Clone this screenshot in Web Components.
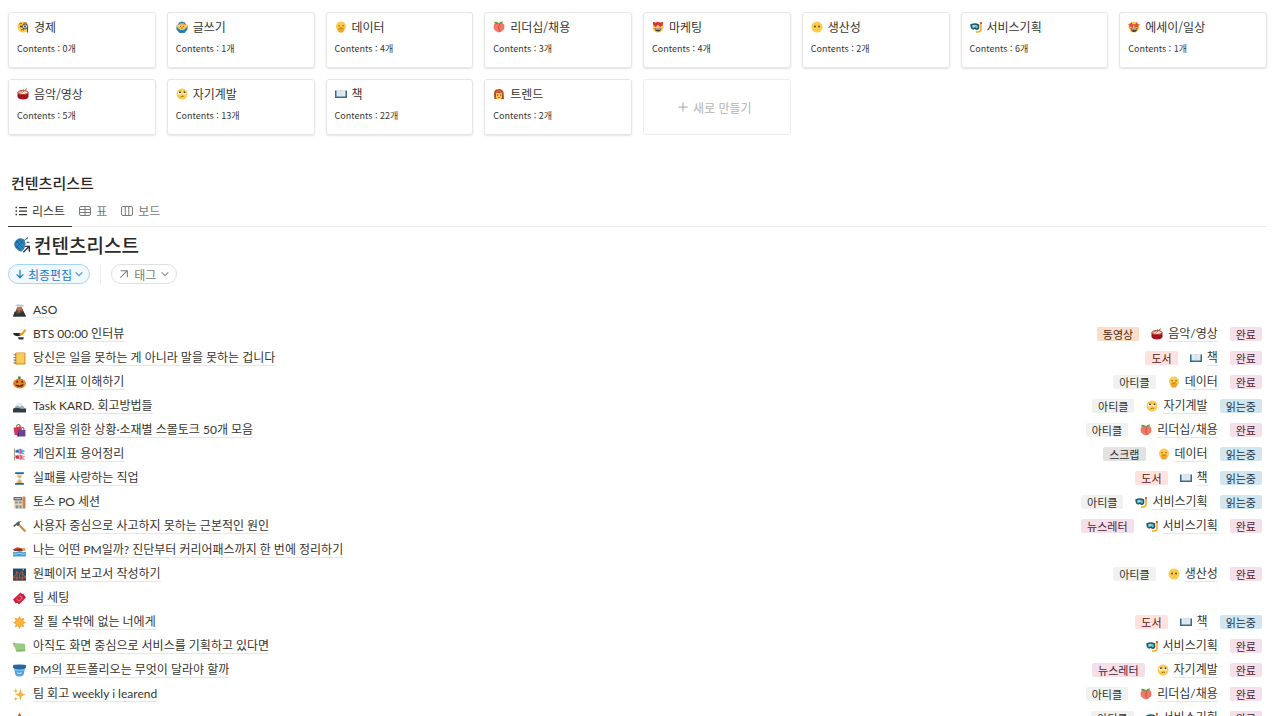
<!DOCTYPE html>
<html lang="ko">
<head>
<meta charset="utf-8">
<meta name="viewport" content="width=device-width, initial-scale=1">
<title>컨텐츠리스트</title>
<style>
    body {
        margin: 0;
        overflow: hidden;
        background: #fff;
        color: #37352f;
        font-family: "Noto Sans CJK KR", "Open Sans", sans-serif;
        font-size: 12px;
    }
</style>
</head>
<body>
<contents-page></contents-page>

<script>
const FACE = '<circle cx="12" cy="12" r="11" fill="#fdcb4c"/>';

const ICONS = {
    monocle: `${FACE}<path d="M4 7q3-4 6-2M13 5q4-3 7 0" fill="none" stroke="#8a6534" stroke-width="2"/><circle cx="8" cy="11" r="2" fill="#493828"/><circle cx="16" cy="11" r="5" fill="#d9e4ea" stroke="#4a4a4a" stroke-width="2"/><circle cx="16" cy="11" r="2" fill="#493828"/><path d="M21 12v11" stroke="#4a4a4a" stroke-width="2"/><path d="M8 18q3-2 6 0" fill="none" stroke="#724f26" stroke-width="2"/>`,
    gesture: `<path d="M12 2 6 4 1 9l1 8 5 6h10l5-6 1-8-5-5z" fill="#fdcb4c"/><path d="M1 8q0 3 4 7l4 3h6l4-3q4-4 4-7v9l-6 7H7l-6-7zM4 9l2-6 6-2 6 2 2 6-3-3-5-2-5 2z" fill="#2580b3"/><path d="M6 8q2-4 6-4t6 4q-6-2-12 0" fill="#f19a38"/><circle cx="9" cy="11" r="1" fill="#5b4223"/><circle cx="15" cy="11" r="1" fill="#5b4223"/><path d="M10 14q2 2 4 0" fill="none" stroke="#a34e20" stroke-width="1.5"/>`,
    yawn: `<circle cx="12" cy="11" r="10" fill="#fdcb4c"/><path d="M6 9q2 2 4 0M14 9q2 2 4 0" fill="none" stroke="#7b532d" stroke-width="1.5"/><path d="M6 14q5-3 11-1l2 3-3 7H8l-3-5z" fill="#f0a529"/><path d="M9 15l6-1" stroke="#b86e1c" stroke-width="1.5"/>`,
    peach: `<path d="M12 4Q2 2 1 11q0 9 11 12 11-3 11-12Q22 2 12 4" fill="#f27765"/><path d="M14 5q-6 7 0 16" fill="none" stroke="#cd5147" stroke-width="2"/><path d="M12 5Q3 8 2 2q7-2 10 3 2-5 8-4-1 6-8 4" fill="#669a43"/>`,
    hearts: `${FACE}<path d="M7 12C-2 5 2-1 7 4c5-5 9 1 0 8M17 12C8 5 12-1 17 4c5-5 9 1 0 8" fill="#df3045"/><path d="M5 14h14q-1 7-7 7t-7-7" fill="#563721"/><path d="M6 15h12l-1 2H7z" fill="#fff"/>`,
    plain: `${FACE}<circle cx="8" cy="11" r="1.8" fill="#55401f"/><circle cx="16" cy="11" r="1.8" fill="#55401f"/>`,
    diving: `<path d="M2 8q8-4 15 0v6q-3 5-7 0-5 4-7-1z" fill="#66bec5" stroke="#225769" stroke-width="3"/><path d="M5 9h6l-3 3z" fill="#e4f5f5"/><path d="M22 2v14q0 6-7 6h-3" fill="none" stroke="#f4a51d" stroke-width="3"/><path d="M22 2v4" stroke="#d34330" stroke-width="3"/>`,
    stars: `${FACE}<path d="m7 2 2 4 4 1-3 3v4l-4-2-4 1 1-4-3-3 5-1zM17 2l2 4 5 1-4 3 1 4-4-2-4 2V9l-3-2 5-1z" fill="#e0523b"/><path d="M5 14h14q-1 8-7 8t-7-8" fill="#5f3928"/><path d="M7 15h10v2H7z" fill="#fff"/>`,
    drum: `<path d="M1 9v9q2 5 11 5t11-5V9z" fill="#a91920"/><path d="m2 14 4 6 5-7 5 8 5-8" fill="none" stroke="#7d1216" stroke-width="1.5"/><ellipse cx="12" cy="9" rx="10" ry="4" fill="#eee4dc" stroke="#b82b2b" stroke-width="2"/><path d="m9 10 11-9M5 9l9-6" stroke="#b67448" stroke-width="2"/>`,
    rolling: `${FACE}<circle cx="7.5" cy="10" r="3.5" fill="#fff"/><circle cx="16.5" cy="10" r="3.5" fill="#fff"/><circle cx="8" cy="8.5" r="2" fill="#4b4136"/><circle cx="17" cy="8.5" r="2" fill="#4b4136"/><path d="M9 18q4-3 7-1" fill="none" stroke="#81592c" stroke-width="1.5"/>`,
    book: `<path d="M0 5h24v15H0z" fill="#356b8d"/><path d="M3 4q6-1 9 1 3-2 9-1v13H3z" fill="#dfe9ef"/><path d="M12 5v13" stroke="#c3d2db" stroke-width="1"/>`,
    woman: `<path d="M3 22Q0 4 7 3q10-4 14 5l1 14z" fill="#b74521"/><path d="M6 10h12v7q0 6-6 6t-6-6z" fill="#fdcb57"/><path d="M5 11q1-6 7-7 6 1 7 7-5-1-7-5-2 4-7 5" fill="#dc6d2d"/><circle cx="9" cy="14" r="1.3" fill="#553b24"/><circle cx="15" cy="14" r="1.3" fill="#553b24"/><path d="M10 19h4" stroke="#a9472e" stroke-width="1.5"/>`,
    volcano: `<path d="M5 4Q3 0 12 1t8 2q-3 3-7 2z" fill="#c3c2c1"/><path d="M8 6h8l8 17H0z" fill="#5b4a44"/><path d="m9 6-2 7 3-2 2 6 2-7 3 3-2-7z" fill="#d9693f"/><path d="m0 23 3-9 5 5 5-2 6-3 5 9z" fill="#2d3335"/>`,
    cooking: `<path d="M0 9h14l2 3q-2 3-7 3-7 0-9-6" fill="#29292c"/><path d="m12 12 5-1 6-8" fill="none" stroke="#ef9a2c" stroke-width="4"/><path d="M9 17h11l-1 4h-8z" fill="#303235"/>`,
    notebook: `<rect x="4" y="1" width="19" height="22" rx="2" fill="#d38f22"/><rect x="6" y="2" width="15" height="19" fill="#f7cc59"/><path d="M1 5h5M1 10h5M1 15h5M1 20h5" stroke="#8a7a5c" stroke-width="2"/>`,
    pumpkin: `<ellipse cx="12" cy="14" rx="12" ry="9" fill="#ef8420"/><path d="M8 5q-5 8 0 17M16 5q5 8 0 17" stroke="#c65c18" fill="none"/><path d="M10 6 9 1h5v5z" fill="#5f7139"/><path d="m5 12 3-4 2 4zM14 12l3-4 2 4zM4 15l4 2 2-1 2 2 3-2 5-1q-2 5-8 5t-8-5" fill="#43271c"/>`,
    mountain: `<path d="M1 17 9 6h6l8 11z" fill="#a3adb6"/><path d="m5 12 4-6h6l5 7-4-3-3 3-4-3z" fill="#e8eff3"/><path d="M0 16q6-3 12-1t12 0v8H0z" fill="#313d43"/>`,
    shopping: `<path d="M7 7V3q3-4 6 0v4M15 12V8q3-3 5 0v4" fill="none" stroke="#9b6b49" stroke-width="2"/><path d="m1 7 14-3 1 18-13-2z" fill="#d83255"/><path d="M10 11h13v12H8z" fill="#69429a"/><path d="m8 22 3-11v12z" fill="#42286d"/>`,
    carp: `<path d="M3 1v22" stroke="#8d6a56" stroke-width="1.5"/><path d="m4 4 9-3 10 4-4 3 3 4-9-1-9-3z" fill="#77b4ed"/><path d="m3 14 9-2 11 3-4 3 4 4-10-1-9-3z" fill="#f29aa8"/><circle cx="8" cy="6" r="2.5" fill="#2e66a5"/><circle cx="8" cy="17" r="3" fill="#cf2e4a"/><path d="m13 3 3 3-3 4M13 13l3 4-3 4" fill="none" stroke="#dc4a62" stroke-width="2"/>`,
    hourglass: `<path d="M6 3h12q0 6-5 9 5 3 5 9H6q0-6 5-9-5-3-5-9" fill="#cce5ec"/><path d="M8 7h8l-4 5zM8 21q1-5 4-7 3 2 4 7z" fill="#f3a52c"/><path d="M4 2h16M4 22h16" stroke="#20679b" stroke-width="3"/>`,
    building: `<path d="M2 6h20v17H2z" fill="#ead4b8"/><path d="M1 2h16v6H1z" fill="#5b5b60"/><path d="M18 1h5v22h-5z" fill="#c68054"/><path d="M4 10h5v4H4zM11 10h5v4h-5zM5 17h5v6H5zM12 17h4v6h-4z" fill="#7897a5"/><path d="M3 5h12" stroke="#fff" stroke-width="1.5"/>`,
    hammer: `<path d="M9 7 23 21" stroke="#d98b31" stroke-width="4"/><path d="M0 11 9 3l7-1-4 3v3l-3 3-3-2-3 4z" fill="#4a565c"/>`,
    swim: `<path d="M0 10 8 6l14 3v4H2z" fill="#c6452e"/><path d="M3 11h15" stroke="#5e3a2b" stroke-width="3"/><circle cx="20" cy="10" r="3" fill="#e5a465"/><path d="M0 14q4 2 8 0t8 0 8 0v9H0z" fill="#4b9dd1"/><path d="M0 18q4 2 8 0t8 0 8 0" fill="none" stroke="#91d1ef" stroke-width="2"/>`,
    bridge: `<path d="M0 1h24v22H0z" fill="#28466c"/><path d="M0 18h24v5H0z" fill="#5f3a35"/><path d="M0 17Q7 15 7 6q5 8 10 0 1 9 7 11M0 18h24M7 6v17M17 6v17M3 14v5M12 10v9M21 14v5" fill="none" stroke="#b5633f" stroke-width="1.5"/><circle cx="19" cy="3" r="1" fill="#fff"/>`,
    ticket: `<path d="m14 1 3 3 2-1 5 7-13 13-3-3-3 1-5-7z" fill="#c9203e"/><path d="m13 6 5 5-7 7-5-5z" fill="#ef8294"/><path d="m12 8 4 3-5 5-4-4z" fill="#c9203e"/>`,
    sun: `<path d="m12 0 3 5 6-2-2 6 5 3-5 3 2 6-6-2-3 5-3-5-6 2 2-6-5-3 5-3-2-6 6 2z" fill="#f8a637"/><circle cx="12" cy="12" r="6" fill="#fdb93f"/>`,
    yarn: `<path d="m5 6 17 1 1 14-17 1-2-7-4-6 3-3z" fill="#9acb84"/><path d="M7 19h15" fill="none" stroke="#7fb26c" stroke-width="2"/><circle cx="2" cy="7" r="2" fill="#e48a6a"/>`,
    pot: `<path d="M1 3h22l-3 15q-1 5-8 5t-8-5z" fill="#569fdc"/><path d="M0 3q0-2 12-2t12 2v4q-4 3-12 3T0 7z" fill="#24689d"/><path d="M8 16q4 3 8 0" fill="none" stroke="#d7eefb" stroke-width="2"/><path d="M2 10q10 3 20 0" fill="none" stroke="#83c7f0" stroke-width="2"/>`,
    sparkles: `<path d="m14 1 2 8 7 3-7 3-2 8-3-8-7-3 7-3zM5 0l1 4 4 1-4 2-1 4-1-4-4-2 4-1zM5 16l1 3 4 1-4 1-1 3-1-3-4-1 4-1z" fill="#f7b33e"/>`,
    tent: `<path d="m12 1 11 20H1z" fill="#b86c35"/>`,
    dart: `<path d="M16 4Q9-1 3 5T4 18t10 1l4-5z" fill="#2f86c0"/><path d="m3 6 12 12M7 3l11 11M1 12l9 8M3 17 14 4M2 10l8-7" stroke="#184e7c" stroke-width="1"/><path d="m17 4 4-3M19 8h4" stroke="#263947" stroke-width="1.5"/><path d="m14 23 8-8M16 14h7v8" fill="none" stroke="#fff" stroke-width="4"/><path d="m14 23 8-8M16 14h7v8" fill="none" stroke="#28343b" stroke-width="2"/>`,
    list: `<path d="M8 5h16M8 12h16M8 19h16" stroke="currentColor" stroke-width="2.5"/><path d="M1 5h3M1 12h3M1 19h3" stroke="currentColor" stroke-width="3"/>`,
    table: `<rect x="1" y="3" width="22" height="18" rx="3" fill="none" stroke="currentColor" stroke-width="2"/><path d="M1 9h22M1 15h22M12 3v18" stroke="currentColor" stroke-width="2"/>`,
    board: `<rect x="1" y="3" width="22" height="18" rx="3" fill="none" stroke="currentColor" stroke-width="2"/><path d="M8.5 3v18M15.5 3v18" stroke="currentColor" stroke-width="2"/>`,
    down: `<path d="M12 2v19M4 13l8 8 8-8" fill="none" stroke="currentColor" stroke-width="3"/>`,
    chevron: `<path d="m2 7 10 10L22 7" fill="none" stroke="currentColor" stroke-width="3.5"/>`,
    arrow: `<path d="M3 21 20 4M4 4h16v16" fill="none" stroke="currentColor" stroke-width="2.5"/>`,
    plus: `<path d="M12 1v22M1 12h22" stroke="currentColor" stroke-width="3"/>`
};

const CATEGORIES = [
    ['monocle', '경제', 0],
    ['gesture', '글쓰기', 1],
    ['yawn', '데이터', 4],
    ['peach', '리더십/채용', 3],
    ['hearts', '마케팅', 4],
    ['plain', '생산성', 2],
    ['diving', '서비스기획', 6],
    ['stars', '에세이/일상', 1],
    ['drum', '음악/영상', 5],
    ['rolling', '자기계발', 13],
    ['book', '책', 22],
    ['woman', '트렌드', 2]
];

// icon, title, type, category, status
const ITEMS = [
    ['volcano', 'ASO'],
    ['cooking', 'BTS 00:00 인터뷰', '동영상', '음악/영상', '완료'],
    ['notebook', '당신은 일을 못하는 게 아니라 말을 못하는 겁니다', '도서', '책', '완료'],
    ['pumpkin', '기본지표 이해하기', '아티클', '데이터', '완료'],
    ['mountain', 'Task KARD. 회고방법들', '아티클', '자기계발', '읽는중'],
    ['shopping', '팀장을 위한 상황·소재별 스몰토크 50개 모음', '아티클', '리더십/채용', '완료'],
    ['carp', '게임지표 용어정리', '스크랩', '데이터', '읽는중'],
    ['hourglass', '실패를 사랑하는 직업', '도서', '책', '읽는중'],
    ['building', '토스 PO 세션', '아티클', '서비스기획', '읽는중'],
    ['hammer', '사용자 중심으로 사고하지 못하는 근본적인 원인', '뉴스레터', '서비스기획', '완료'],
    ['swim', '나는 어떤 PM일까? 진단부터 커리어패스까지 한 번에 정리하기'],
    ['bridge', '원페이저 보고서 작성하기', '아티클', '생산성', '완료'],
    ['ticket', '팀 세팅'],
    ['sun', '잘 될 수밖에 없는 너에게', '도서', '책', '읽는중'],
    ['yarn', '아직도 화면 중심으로 서비스를 기획하고 있다면', '', '서비스기획', '완료'],
    ['pot', 'PM의 포트폴리오는 무엇이 달라야 할까', '뉴스레터', '자기계발', '완료'],
    ['sparkles', '팀 회고 weekly i learend', '아티클', '리더십/채용', '완료'],
    ['tent', '', '아티클', '서비스기획', '완료']
];

const TAG_COLORS = {
    '동영상': 'orange',
    '도서': 'red',
    '아티클': 'light',
    '스크랩': 'gray',
    '뉴스레터': 'pink',
    '완료': 'pink',
    '읽는중': 'blue'
};

class PageIcon extends HTMLElement {
    constructor() {
        super();
        this.attachShadow({ mode: 'open' });
    }

    connectedCallback() {
        this.shadowRoot.innerHTML = `
            <style>
                :host { display: block; flex: none; width: var(--icon-size, 12px); height: var(--icon-size, 12px); }
                svg { display: block; width: 100%; height: 100%; }
            </style>
            <svg viewBox="0 0 24 24" aria-hidden="true">${ICONS[this.getAttribute('name')]}</svg>
        `;
    }
}

class CategoryCard extends HTMLElement {
    constructor() {
        super();
        this.attachShadow({ mode: 'open' });
        this.shadowRoot.innerHTML = `
            <style>
                :host { display: block; }
                a {
                    display: flex;
                    flex-direction: column;
                    gap: 6px;
                    padding: 6px 8px 10px;
                    border: 1px solid #e6e6e5;
                    border-radius: 3px;
                    box-shadow: 0 1px 2px rgba(15, 15, 15, .12);
                    color: inherit;
                    text-decoration: none;
                }
                .title { display: flex; align-items: center; gap: 5px; line-height: 16px; }
                .count { font-size: 9px; line-height: 16px; }
            </style>
            <a href="#">
                <span class="title"><slot name="icon"></slot><slot></slot></span>
                <span class="count"><slot name="count"></slot></span>
            </a>
        `;
    }
}

class NewCard extends HTMLElement {
    constructor() {
        super();
        this.attachShadow({ mode: 'open' });
        this.shadowRoot.innerHTML = `
            <style>
                :host { display: flex; --icon-size: 10px; }
                button {
                    display: flex;
                    flex: 1;
                    align-items: center;
                    justify-content: center;
                    gap: 5px;
                    padding: 0 12px 0 8px;
                    background: none;
                    border: 1px solid #ededec;
                    border-radius: 3px;
                    color: #b5b4b1;
                    font: inherit;
                }
            </style>
            <button type="button"><page-icon name="plus"></page-icon><slot></slot></button>
        `;
    }
}

class ViewTab extends HTMLElement {
    constructor() {
        super();
        this.attachShadow({ mode: 'open' });
        this.shadowRoot.innerHTML = `
            <style>
                :host { display: block; color: #7b7a76; }
                :host([active]) { color: #37352f; box-shadow: 0 1px #37352f; }
                button {
                    display: flex;
                    align-items: center;
                    gap: 5px;
                    height: 31px;
                    padding: 0 7px;
                    background: none;
                    border: 0;
                    color: inherit;
                    font: inherit;
                }
            </style>
            <button type="button"><slot name="icon"></slot><slot></slot></button>
        `;
    }
}

class FilterPill extends HTMLElement {
    constructor() {
        super();
        this.attachShadow({ mode: 'open' });
        this.shadowRoot.innerHTML = `
            <style>
                :host { display: block; --icon-size: 10px; }
                button {
                    display: flex;
                    align-items: center;
                    gap: 5px;
                    height: 20px;
                    padding: 0 7px;
                    background: #fff;
                    border: 1px solid #e0e0df;
                    border-radius: 10px;
                    color: #7b7a76;
                    font: inherit;
                }
                :host([active]) button { gap: 3px; padding: 0 6px; background: #f2f9fe; border-color: #a9d3f3; color: #1f7bc8; }
                .chevron { --icon-size: 8px; opacity: .8; }
            </style>
            <button type="button">
                <slot name="icon"></slot><slot></slot><page-icon class="chevron" name="chevron"></page-icon>
            </button>
        `;
    }
}

class TagChip extends HTMLElement {
    constructor() {
        super();
        this.attachShadow({ mode: 'open' });
        this.shadowRoot.innerHTML = `
            <style>
                :host {
                    display: block;
                    padding: 0 6px;
                    border-radius: 2px;
                    background: #f1f1ef;
                    color: #32302c;
                    font-size: 11px;
                    line-height: 14px;
                }
                :host([color="orange"]) { background: #fadec9; color: #49290e; }
                :host([color="red"]) { background: #ffe2dd; color: #5d1715; }
                :host([color="gray"]) { background: #e3e2e0; }
                :host([color="pink"]) { background: #f5e0e9; color: #4c2337; }
                :host([color="blue"]) { background: #d3e5ef; color: #183347; }
            </style>
            <slot></slot>
        `;
    }
}

class PageLink extends HTMLElement {
    constructor() {
        super();
        this.attachShadow({ mode: 'open' });
        this.shadowRoot.innerHTML = `
            <style>
                :host { display: block; font-family: Lato, "Noto Sans CJK KR", sans-serif; }
                a {
                    display: flex;
                    align-items: center;
                    gap: var(--link-gap, 5px);
                    color: inherit;
                    line-height: 14px;
                    text-decoration: none;
                    white-space: nowrap;
                }
                .text { border-bottom: 1px solid #e6e6e4; }
            </style>
            <a href="#"><slot name="icon"></slot><span class="text"><slot></slot></span></a>
        `;
    }
}

class ContentList extends HTMLElement {
    constructor() {
        super();
        this.attachShadow({ mode: 'open' });
    }

    connectedCallback() {
        this.shadowRoot.innerHTML = `
            <style>
                :host { display: block; }
                ul { margin: 0; padding: 0 5px; list-style: none; }
                li { display: flex; align-items: center; justify-content: space-between; height: 24px; }
                .title { --link-gap: 7px; --icon-size: 13px; }
                .props { display: flex; align-items: center; gap: 12px; }
            </style>
            <ul>${ITEMS.map(item => this.row(item)).join('')}</ul>
        `;
    }

    row([icon, title, type, category, status]) {
        return `
            <li>
                <page-link class="title"><page-icon slot="icon" name="${icon}"></page-icon>${title}</page-link>
                <div class="props">
                    ${type ? this.tag(type) : ''}
                    ${category ? this.category(category) : ''}
                    ${status ? this.tag(status) : ''}
                </div>
            </li>
        `;
    }

    tag(name) {
        return `<tag-chip color="${TAG_COLORS[name]}">${name}</tag-chip>`;
    }

    category(name) {
        const [icon] = CATEGORIES.find(c => c[1] === name);
        return `<page-link><page-icon slot="icon" name="${icon}"></page-icon>${name}</page-link>`;
    }
}

class ContentsPage extends HTMLElement {
    constructor() {
        super();
        this.attachShadow({ mode: 'open' });
    }

    connectedCallback() {
        this.shadowRoot.innerHTML = `
            <style>
                :host { display: block; padding: 12px 13px 0 8px; }
                h1, h2 { margin: 0; color: #2b2a26; }
                .cards {
                    display: grid;
                    grid-template-columns: repeat(auto-fill, minmax(140px, 1fr));
                    gap: 11px;
                }
                h2 { margin-top: 36px; padding-left: 3px; font-size: 15px; font-weight: 500; line-height: 24px; }
                nav { display: flex; border-bottom: 1px solid #e9e9e7; }
                h1 {
                    --icon-size: 16px;
                    display: flex;
                    align-items: center;
                    gap: 4px;
                    padding: 5px 6px 6px;
                    font-size: 19px;
                    font-weight: 500;
                    line-height: 26px;
                }
                .filters { display: flex; align-items: center; gap: 10px; }
                .divider { width: 1px; height: 20px; background: #ededec; }
                content-list { margin-top: 14px; }
            </style>
            <section class="cards">
                ${CATEGORIES.map(([icon, name, count]) => `
                    <category-card>
                        <page-icon slot="icon" name="${icon}"></page-icon>${name}
                        <span slot="count">Contents : ${count}개</span>
                    </category-card>
                `).join('')}
                <new-card>새로 만들기</new-card>
            </section>
            <h2>컨텐츠리스트</h2>
            <nav>
                <view-tab active><page-icon slot="icon" name="list"></page-icon>리스트</view-tab>
                <view-tab><page-icon slot="icon" name="table"></page-icon>표</view-tab>
                <view-tab><page-icon slot="icon" name="board"></page-icon>보드</view-tab>
            </nav>
            <h1><page-icon name="dart"></page-icon>컨텐츠리스트</h1>
            <div class="filters">
                <filter-pill active><page-icon slot="icon" name="down"></page-icon>최종편집</filter-pill>
                <span class="divider"></span>
                <filter-pill><page-icon slot="icon" name="arrow"></page-icon>태그</filter-pill>
            </div>
            <content-list></content-list>
        `;
    }
}

customElements.define('page-icon', PageIcon);
customElements.define('category-card', CategoryCard);
customElements.define('new-card', NewCard);
customElements.define('view-tab', ViewTab);
customElements.define('filter-pill', FilterPill);
customElements.define('tag-chip', TagChip);
customElements.define('page-link', PageLink);
customElements.define('content-list', ContentList);
customElements.define('contents-page', ContentsPage);
</script>
</body>
</html>
